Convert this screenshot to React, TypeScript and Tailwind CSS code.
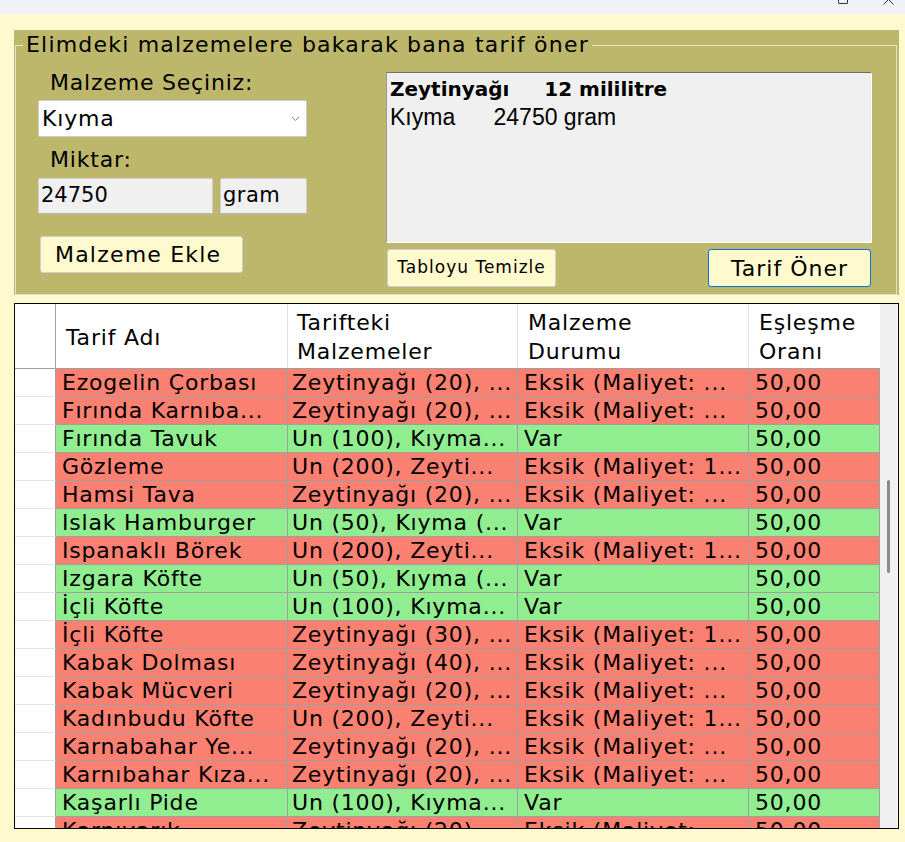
import React from 'react';

type Tarif = {
    ad: string;
    malzemeler: string;
    durum: string;
    oran: string;
    eksik: boolean;
};

const tarifler: Tarif[] = [
    { ad: 'Ezogelin Çorbası', malzemeler: 'Zeytinyağı (20), ...', durum: 'Eksik (Maliyet: ...', oran: '50,00', eksik: true },
    { ad: 'Fırında Karnıba...', malzemeler: 'Zeytinyağı (20), ...', durum: 'Eksik (Maliyet: ...', oran: '50,00', eksik: true },
    { ad: 'Fırında Tavuk', malzemeler: 'Un (100), Kıyma...', durum: 'Var', oran: '50,00', eksik: false },
    { ad: 'Gözleme', malzemeler: 'Un (200), Zeyti...', durum: 'Eksik (Maliyet: 1...', oran: '50,00', eksik: true },
    { ad: 'Hamsi Tava', malzemeler: 'Zeytinyağı (20), ...', durum: 'Eksik (Maliyet: ...', oran: '50,00', eksik: true },
    { ad: 'Islak Hamburger', malzemeler: 'Un (50), Kıyma (...', durum: 'Var', oran: '50,00', eksik: false },
    { ad: 'Ispanaklı Börek', malzemeler: 'Un (200), Zeyti...', durum: 'Eksik (Maliyet: 1...', oran: '50,00', eksik: true },
    { ad: 'Izgara Köfte', malzemeler: 'Un (50), Kıyma (...', durum: 'Var', oran: '50,00', eksik: false },
    { ad: 'İçli Köfte', malzemeler: 'Un (100), Kıyma...', durum: 'Var', oran: '50,00', eksik: false },
    { ad: 'İçli Köfte', malzemeler: 'Zeytinyağı (30), ...', durum: 'Eksik (Maliyet: 1...', oran: '50,00', eksik: true },
    { ad: 'Kabak Dolması', malzemeler: 'Zeytinyağı (40), ...', durum: 'Eksik (Maliyet: ...', oran: '50,00', eksik: true },
    { ad: 'Kabak Mücveri', malzemeler: 'Zeytinyağı (20), ...', durum: 'Eksik (Maliyet: ...', oran: '50,00', eksik: true },
    { ad: 'Kadınbudu Köfte', malzemeler: 'Un (200), Zeyti...', durum: 'Eksik (Maliyet: 1...', oran: '50,00', eksik: true },
    { ad: 'Karnabahar Ye...', malzemeler: 'Zeytinyağı (20), ...', durum: 'Eksik (Maliyet: ...', oran: '50,00', eksik: true },
    { ad: 'Karnıbahar Kıza...', malzemeler: 'Zeytinyağı (20), ...', durum: 'Eksik (Maliyet: ...', oran: '50,00', eksik: true },
    { ad: 'Kaşarlı Pide', malzemeler: 'Un (100), Kıyma...', durum: 'Var', oran: '50,00', eksik: false },
    { ad: 'Karnıyarık', malzemeler: 'Zeytinyağı (20), ...', durum: 'Eksik (Maliyet: ...', oran: '50,00', eksik: true },
];

const font = "font-['DejaVu_Sans',sans-serif]";
const genislik = ['w-[232px]', 'w-[230px]', 'w-[231px]', 'w-[131px]'];

export default function App() {
    return (
        <div className={`w-[905px] h-[842px] bg-[#fffacd] overflow-hidden text-black ${font}`}>
            {/* pencere ust seridi */}
            <div className="relative h-[14px] bg-[#eff1f6] overflow-hidden">
                <div className="absolute left-[838px] top-[-6px] w-[10px] h-[10px] border border-[#333] rounded-[1px]" />
                <svg className="absolute left-[883px] top-[-6px]" width="11" height="11" viewBox="0 0 11 11">
                    <path d="M0.5 0.5 L10.5 10.5 M10.5 0.5 L0.5 10.5" stroke="#333" strokeWidth="1" />
                </svg>
            </div>

            {/* ust panel */}
            <div className="mt-[16px] ml-[14px] w-[885px] h-[265px] bg-[#bdb76b]">
                <fieldset className="ml-[1px] mr-[2px] h-[265px] border border-[#e4e2d0] px-0 pb-0 m-0">
                    <legend className="ml-[7px] px-[3px] text-[22px] leading-[30px] tracking-[1.2px]">
                        Elimdeki malzemelere bakarak bana tarif öner
                    </legend>
                    <div className="flex pl-[22px]">
                        {/* sol */}
                        <div className="w-[269px] flex flex-col">
                            <div className="mt-[9px] ml-[12px] h-[28px] text-[22px] leading-[28px] tracking-[0.8px] whitespace-nowrap">Malzeme Seçiniz:</div>
                            <div className="mt-[3px] h-[37px] bg-white border border-[#cccccc] rounded-[2px] flex items-center justify-between pl-[3px] pr-[6px]">
                                <span className="text-[22px] tracking-[0.8px]">Kıyma</span>
                                <svg width="9" height="6" viewBox="0 0 9 6">
                                    <path d="M1 1 L4.5 4.5 L8 1" stroke="#888" strokeWidth="1" fill="none" />
                                </svg>
                            </div>
                            <div className="mt-[9px] ml-[12px] h-[28px] text-[22px] leading-[28px] tracking-[0.8px]">Miktar:</div>
                            <div className="mt-[4px] flex gap-[7px]">
                                <div className="w-[175px] h-[36px] bg-[#f0f0f0] border border-[#cfcfcf] border-b-[#b5b5b5] rounded-[2px] flex items-center pl-[2px] text-[21px]">
                                    24750
                                </div>
                                <div className="w-[87px] h-[36px] bg-[#f0f0f0] border border-[#cfcfcf] border-b-[#b5b5b5] rounded-[2px] flex items-center pl-[2px] text-[21px] tracking-[0.5px]">
                                    gram
                                </div>
                            </div>
                            <button className="mt-[22px] ml-[2px] w-[203px] h-[37px] bg-[#fffacd] border border-[#d0d0d0] rounded-[3px] text-[22px] tracking-[1.2px] text-left pl-[14px] whitespace-nowrap">
                                Malzeme Ekle
                            </button>
                        </div>

                        {/* sag */}
                        <div className="ml-[79px] w-[486px] flex flex-col">
                            <div className="mt-[12px] h-[171px] bg-[#f0f0f0] border border-t-[#6e6e6e] border-l-[#9a9a9a] border-r-white border-b-white pl-[3px] pt-[2px]">
                                <div className="text-[20px] leading-[28px] font-semibold whitespace-pre">Zeytinyağı     12 mililitre</div>
                                <div className="text-[23px] leading-[28px] font-['Liberation_Sans',sans-serif] whitespace-pre">Kıyma      24750 gram</div>
                            </div>
                            <div className="mt-[6px] flex justify-between">
                                <button className="ml-[1px] w-[169px] h-[38px] bg-[#fffacd] border border-[#d0d0d0] rounded-[3px] text-[17px] tracking-[1px] whitespace-nowrap">
                                    Tabloyu Temizle
                                </button>
                                <button className="mr-[1px] w-[163px] h-[38px] bg-[#fffacd] border border-[#0078d7] rounded-[3px] text-[22px] tracking-[1px]">
                                    Tarif Öner
                                </button>
                            </div>
                        </div>
                    </div>
                </fieldset>
            </div>

            {/* tablo */}
            <div className="mt-[8px] ml-[14px] w-[885px] h-[526px] border border-black bg-white flex overflow-hidden">
                <div className="w-[865px] flex flex-col">
                    <div className="flex h-[65px] border-b border-[#a0a0a0] shrink-0 text-[22px] leading-[29px] tracking-[0.8px]">
                        <div className="w-[41px] border-r border-[#a0a0a0]" />
                        <div className="w-[232px] border-r border-[#e3e3e3] flex items-center pl-[10px] pt-[2px]">Tarif Adı</div>
                        <div className="w-[230px] border-r border-[#e3e3e3] flex items-center pl-[9px] pt-[2px]">Tarifteki<br />Malzemeler</div>
                        <div className="w-[231px] border-r border-[#e3e3e3] flex items-center pl-[10px] pt-[2px]">Malzeme<br />Durumu</div>
                        <div className="w-[131px] flex items-center pl-[10px] pt-[2px]">Eşleşme<br />Oranı</div>
                    </div>
                    {tarifler.map((t, i) => (
                        <div key={i} className="flex h-[28px] shrink-0 text-[22px] leading-[28px] tracking-[0.8px]">
                            <div className="w-[41px] bg-white border-b border-[#e3e3e3] border-r border-r-[#a0a0a0]" />
                            {[t.ad, t.malzemeler, t.durum, t.oran].map((v, j) => (
                                <div
                                    key={j}
                                    className={`${genislik[j]} ${t.eksik ? 'bg-[#fa8072]' : 'bg-[#90ee90]'} border-b border-r border-[#a0a0a0] whitespace-nowrap overflow-hidden ${j === 1 ? 'pl-[4px]' : 'pl-[6px]'}`}
                                >
                                    {v}
                                </div>
                            ))}
                        </div>
                    ))}
                </div>
                <div className="w-[17px] bg-[#f0f0f0] flex justify-center">
                    <div className="mt-[176px] w-[3px] h-[93px] bg-[#8a8a8a] rounded-full" />
                </div>
                <div className="w-[1px] bg-white" />
            </div>
        </div>
    );
}
